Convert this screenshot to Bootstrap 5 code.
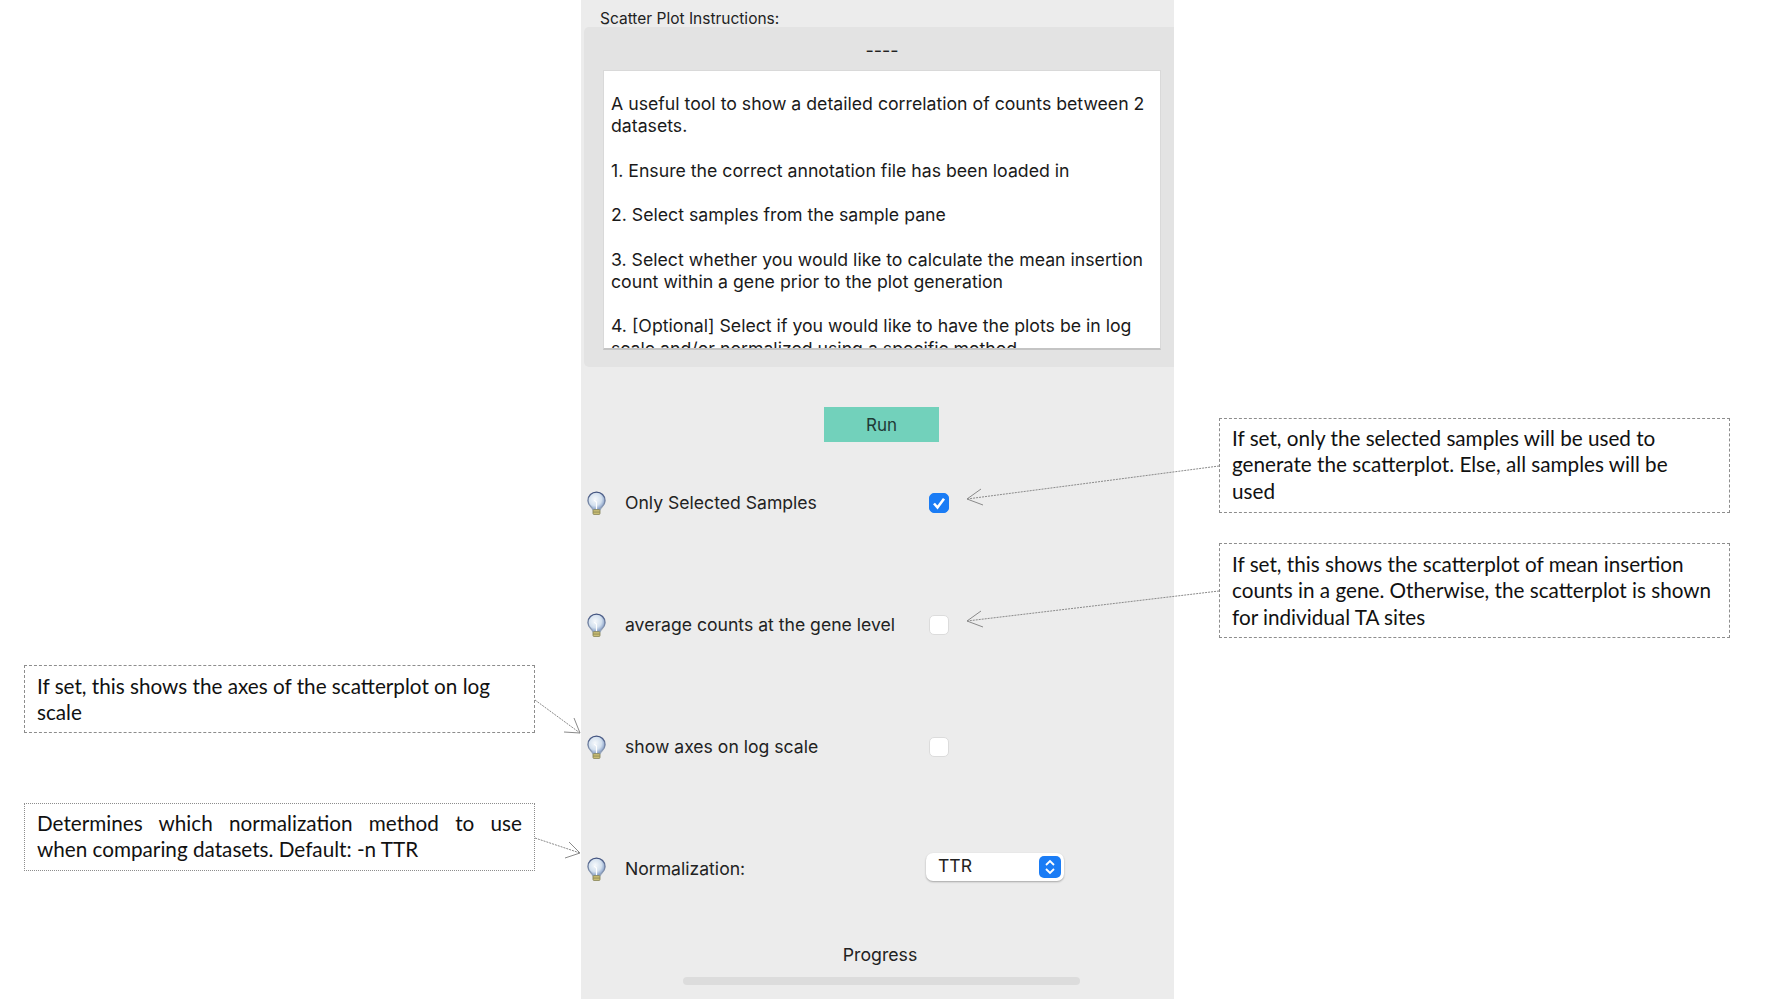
<!DOCTYPE html>
<html lang="en">
<head>
  <meta charset="UTF-8">
  <title>Scatter Plot</title>
  <link href="https://cdn.jsdelivr.net/npm/bootstrap@5.3.3/dist/css/bootstrap.min.css" rel="stylesheet">
  <style>
    html, body { height: 1000px; overflow: hidden; background: #fff; }
    body { font-family: Inter, "Liberation Sans", Arial, sans-serif; color: #222; position: relative; }
    .side-left { width: 581px; padding: 665px 0 0 24px; }
    .side-right { padding: 418px 0 0 45px; }
    .tool-panel { width: 593px; height: 999px; background: #ececec; }
    .panel-title { font-size: 15.5px; padding: 10px 0 0 19px; height: 27px; line-height: 17px; }
    .inst-box { height: 340px; margin-left: 3px; background: #e3e3e3; border-radius: 5px 0 0 5px; padding: 0 13px 0 19px; }
    .inst-head { height: 43px; line-height: 48px; font-size: 18px; text-align: center; }
    .inst-text { height: 280px; background: #fff; border: 1px solid #d9d9d9; border-bottom: 2px solid #c4c4c4; overflow: hidden; padding: 22px 7px 0; font-size: 17.7px; line-height: 22.4px; color: #1a1a1a; }
    .inst-text p { margin: 0 0 22px; }
    .run-btn { width: 115px; height: 35px; margin: 40px 0 0 8px; padding: 3px 0 0; border: 0; border-radius: 0; background: #72d1bb; color: #1f3a35; font-size: 17px; }
    .run-btn:hover { background: #72d1bb; color: #1f3a35; }
    .opt-row { height: 122px; padding-left: 6px; }
    .opt-label { width: 303px; margin-left: 19px; padding-top: 1px; font-size: 17.6px; }
    .opt-check.form-check-input { width: 20px; height: 20px; margin: -1px 0 0 1px; border: 1px solid #dcdcdc; border-radius: 5px; box-shadow: none; }
    .opt-check.form-check-input:checked { background-color: #1a7cf5; border-color: #1a7cf5; background-size: 16px 16px; background-image: url("data:image/svg+xml,%3csvg xmlns='http://www.w3.org/2000/svg' viewBox='0 0 16 16'%3e%3cpath d='M3 8.500l3.500 4L13 3.800' fill='none' stroke='%23fff' stroke-width='2.600'/%3e%3c/svg%3e"); }
    .opt-select.form-select { width: 138px; height: 28px; padding: 0 30px 1px 12px; margin-top: -4px; margin-left: -2px; font-size: 17.6px; color: #222; border: 0; border-radius: 7px; box-shadow: 0 1px 2px rgba(0,0,0,.3); background-position: right 3px center; background-size: 22px 22px; background-image: url("data:image/svg+xml,%3csvg xmlns='http://www.w3.org/2000/svg' viewBox='0 0 22 22'%3e%3crect width='22' height='22' rx='5' fill='%231a7cf5'/%3e%3cpath d='M7 9l4-4 4 4M7 13l4 4 4-4' fill='none' stroke='%23fff' stroke-width='1.800'/%3e%3c/svg%3e"); }
    .prog-title { font-size: 17.7px; line-height: 22px; margin: 14px 0 0 5px; }
    .prog-track.progress { width: 397px; height: 8px; margin: 11px 0 0 102px; background: #dcdcdc; border-radius: 4px; }
    .note-box { width: 511px; padding: 6px 12px 0; background: #fff; font-family: Lato, "Liberation Sans", sans-serif; font-size: 20.7px; line-height: 26.4px; color: #111; border: 1px dashed #8d8d8d; }
    .note-left-a { height: 68px; margin-bottom: 70px; padding-top: 7px; }
    .note-left-b { height: 68px; border-style: dotted; }
    .note-line-just { text-align: justify; text-align-last: justify; }
    .note-right-a { height: 95px; margin-bottom: 30px; padding-right: 40px; }
    .note-right-b { height: 95px; padding-top: 7px; }
    .arrow-layer { position: absolute; left: 0; top: 0; width: 1778px; height: 1000px; pointer-events: none; }
  </style>
</head>
<body>
  <div class="d-flex">
    <!-- left notes -->
    <div class="side-left flex-shrink-0">
      <div class="note-box note-left-a">If set, this shows the axes of the scatterplot on log scale</div>
      <div class="note-box note-left-b"><div class="note-line-just">Determines which normalization method to use</div>when comparing datasets. Default: -n TTR</div>
    </div>

    <!-- tool window -->
    <div class="tool-panel flex-shrink-0">
      <div class="panel-title">Scatter Plot Instructions:</div>
      <div class="inst-box">
        <div class="inst-head">----</div>
        <div class="inst-text">
          <p>A useful tool to show a detailed correlation of counts between 2 datasets.</p>
          <p>1. Ensure the correct annotation file has been loaded in</p>
          <p>2. Select samples from the sample pane</p>
          <p>3. Select whether you would like to calculate the mean insertion count within a gene prior to the plot generation</p>
          <p>4. [Optional] Select if you would like to have the plots be in log scale and/or normalized using a specific method</p>
        </div>
      </div>
      <div class="text-center">
        <button type="button" class="btn run-btn">Run</button>
      </div>
      <div id="optList"></div>
      <div class="text-center prog-title">Progress</div>
      <div class="progress prog-track"><div class="progress-bar" style="width: 0%"></div></div>
    </div>

    <!-- right notes -->
    <div class="side-right flex-shrink-0">
      <div class="note-box note-right-a">If set, only the selected samples will be used to generate the scatterplot. Else, all samples will be used</div>
      <div class="note-box note-right-b">If set, this shows the scatterplot of mean insertion counts in a gene. Otherwise, the scatterplot is shown for individual TA sites</div>
    </div>
  </div>

  <!-- arrows between notes and options -->
  <svg class="arrow-layer" viewBox="0 0 1778 1000" fill="none" stroke="#8a8a8a" stroke-width="1">
    <path d="M1219 466L967 499" stroke-dasharray="2 1"/>
    <path d="M981 489L967 499L983 505"/>
    <path d="M1219 591L967 621" stroke-dasharray="2 1"/>
    <path d="M981 611L967 621L983 627"/>
    <path d="M535 700L580 733" stroke-dasharray="2 1"/>
    <path d="M564 732L580 733L574 718"/>
    <path d="M535 838L580 853" stroke-dasharray="2 1"/>
    <path d="M565 858L580 853L569 842"/>
  </svg>

  <svg width="0" height="0" class="position-absolute">
    <defs>
      <radialGradient id="glassFill" cx="0.42" cy="0.4" r="0.62">
        <stop offset="0" stop-color="#f6f9fc"/>
        <stop offset="0.6" stop-color="#d3e0ee"/>
        <stop offset="1" stop-color="#7f98c4"/>
      </radialGradient>
      <linearGradient id="glassEdge" x1="0" y1="0" x2="0" y2="1">
        <stop offset="0" stop-color="#41527f"/>
        <stop offset="1" stop-color="#9aa9bd"/>
      </linearGradient>
      <symbol id="bulbIcon" viewBox="0 0 20 26">
        <path d="M10 1C5 1 1 5 1 10c0 3.500 2 5.400 3.600 7 .8.800 1.200 1.600 1.400 2.500h8c.2-.9.600-1.700 1.400-2.500C17 15.400 19 13.500 19 10c0-5-4-9-9-9z" fill="url(#glassFill)" stroke="url(#glassEdge)" stroke-width="1.400"/>
        <path d="M10 19V11.500L7.500 9.500" fill="none" stroke="#fff" stroke-width="1.200"/>
        <rect x="6.300" y="19.500" width="7.400" height="5" rx="1" fill="#cfc277" stroke="#7b7a4e" stroke-width=".8"/>
        <path d="M6.500 22h7" stroke="#7b7a4e" stroke-width=".8"/>
      </symbol>
    </defs>
  </svg>

  <script>
    const opciones = [
      { label: 'Only Selected Samples', checked: true },
      { label: 'average counts at the gene level', checked: false },
      { label: 'show axes on log scale', checked: false },
      { label: 'Normalization:', select: 'TTR' }
    ];

    // one row per option
    document.getElementById('optList').innerHTML = opciones.map(o => {
      const control = o.select
        ? `<select class="form-select opt-select"><option>${o.select}</option></select>`
        : `<input class="form-check-input opt-check" type="checkbox"${o.checked ? ' checked' : ''}>`;
      return `<div class="d-flex align-items-center opt-row">
        <svg width="19" height="25"><use href="#bulbIcon"/></svg>
        <span class="opt-label">${o.label}</span>
        ${control}
      </div>`;
    }).join('');
  </script>
  <script src="https://cdn.jsdelivr.net/npm/bootstrap@5.3.3/dist/js/bootstrap.bundle.min.js"></script>
</body>
</html>
